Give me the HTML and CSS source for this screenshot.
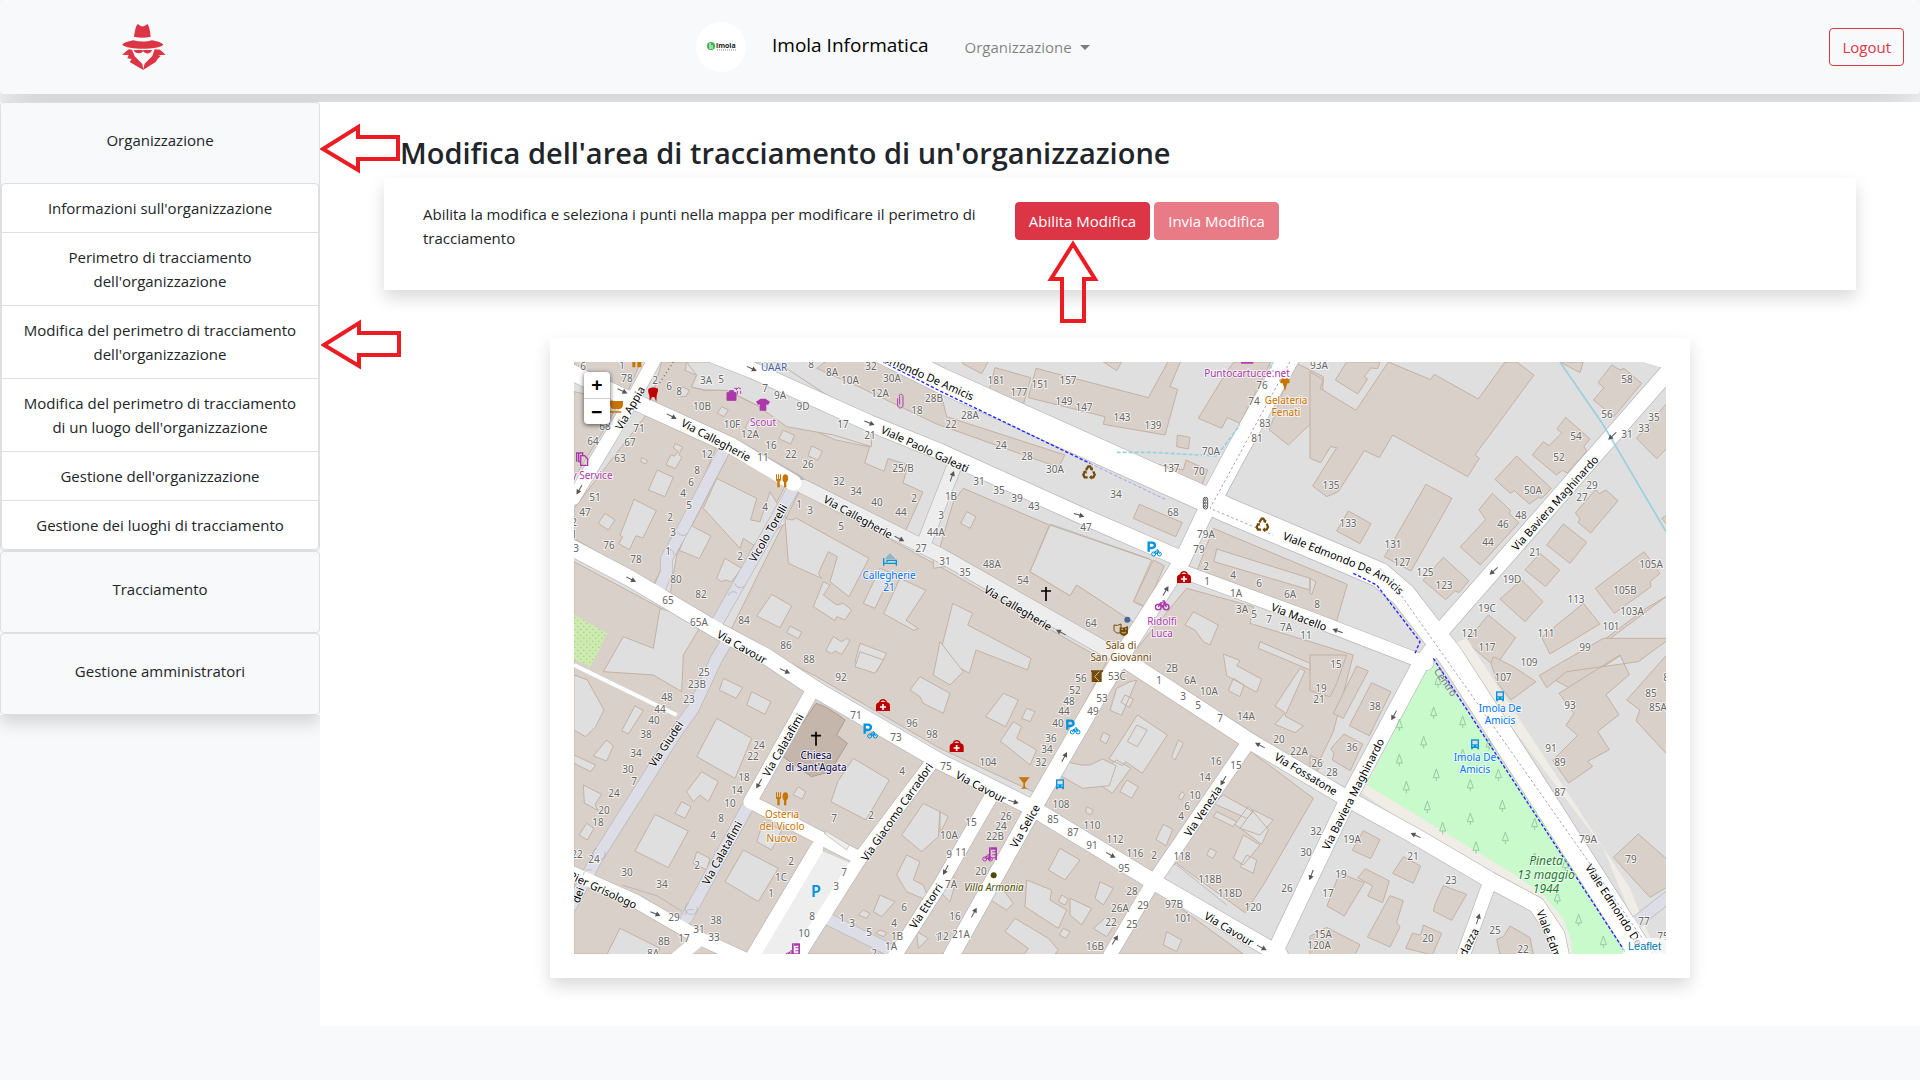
FILE: index.html
```html
<!DOCTYPE html>
<html lang="it">
<head>
<meta charset="utf-8">
<meta name="viewport" content="width=device-width, initial-scale=1">
<title>Modifica dell'area di tracciamento</title>
<link rel="stylesheet" href="styles.css">
</head>
<body>
<header class="navbar">
  <a class="navbar-logo" href="#" aria-label="Home">
    <svg width="44" height="46" viewBox="0 0 132 138" fill="#dc3545">
      <path d="M36 38C38 22 42 6 46 1c3-2 6 3 10 5 4 2 7 2 11 0 4-2 7-6 10-5 4 5 8 21 9 37-15 4-35 4-50 0z"/>
      <path d="M1 62C8 53 24 52 34 49c18 5 39 5 56 0 12 3 27 5 34 13-14 16-108 16-123 0z"/>
      <path d="M0 92 20 76l10 1 8 20 23 23 3 18-41-24 6-9-13-2 4-10z"/>
      <path d="M131 92 114 77l-16-1-7 20-23 23-5 19 38-24 6-9 9-9-8-2z"/>
      <path d="M35 78h26l1 3 2-3h26c-3 13-20 13-26 4-7 9-26 7-29-4z"/>
    </svg>
  </a>
  <div class="navbar-center">
    <span class="org-logo">
      <svg width="31" height="12" viewBox="0 0 31 12">
        <circle cx="5" cy="5" r="4" fill="#3bb54a"/>
        <path d="M4 2v6M6 4v4" stroke="#fff" stroke-width="1"/>
        <text x="10" y="7" class="org-logo-text">imola</text>
        <path d="M11 9h19" stroke="#888" stroke-width="1" stroke-dasharray="1 1"/>
      </svg>
    </span>
    <a class="navbar-brand" href="#">Imola Informatica</a>
    <button class="nav-dropdown" type="button">Organizzazione</button>
  </div>
  <button class="btn btn-outline" type="button">Logout</button>
</header>

<div class="layout">
  <nav class="sidebar">
    <div class="accordion">
      <section class="menu-card">
        <button class="menu-header" type="button">Organizzazione</button>
        <div class="menu-list">
          <a href="#">Informazioni sull'organizzazione</a>
          <a href="#">Perimetro di tracciamento dell'organizzazione</a>
          <a href="#">Modifica del perimetro di tracciamento dell'organizzazione</a>
          <a href="#">Modifica del perimetro di tracciamento di un luogo dell'organizzazione</a>
          <a href="#">Gestione dell'organizzazione</a>
          <a href="#">Gestione dei luoghi di tracciamento</a>
        </div>
      </section>
      <section class="menu-card"><button class="menu-header" type="button">Tracciamento</button></section>
      <section class="menu-card"><button class="menu-header" type="button">Gestione amministratori</button></section>
    </div>
  </nav>

  <main class="content">
    <h1>Modifica dell'area di tracciamento di un'organizzazione</h1>
    <section class="panel edit-panel">
      <p>Abilita la modifica e seleziona i punti nella mappa per modificare il perimetro di tracciamento</p>
      <div class="actions">
        <button class="btn btn-danger" type="button">Abilita Modifica</button>
        <button class="btn btn-danger" type="button" disabled>Invia Modifica</button>
      </div>
    </section>
    <section class="panel map-panel">
      <div class="map">
        <svg class="map-canvas" id="map" viewBox="0 0 1092 592">
          <defs>
            <g id="arrow"><path d="M-16 0H6" stroke="#555" stroke-width="3"/><path d="M2-8 17 0 2 8z" fill="#555"/></g>
            <g id="medical"><path d="M-21 17V1c0-6 5-9 9-10C-9-22 9-22 12-9c5 1 9 4 9 10v16z" fill="#bf0000"/><path d="M-7-10c2-6 12-6 14 0z" fill="#d9d0c9"/><path d="M-9 5H9M0-4v18" stroke="#fff" stroke-width="5"/></g>
            <g id="bus"><path d="M-12-14h24v26H-12z" fill="#0092da"/><path d="M-8-10H8V1H-8z" fill="#dfdfdf"/><path d="M-9 11v5M9 11v5" stroke="#0092da" stroke-width="5"/><path d="M-8 6h4M4 6h4" stroke="#fff" stroke-width="3"/></g>
            <g id="bike" fill="none" stroke-width="3"><circle cx="-8" cy="3" r="6"/><circle cx="9" cy="3" r="6"/><path d="M-8 3-3-6H6L0 3-3-6M9 3 5-10H1"/></g>
            <g id="bikepark" stroke="#0092da"><path d="M-15 10v-27h9c13 0 13 16 0 16h-9" fill="none" stroke-width="7"/><use href="#bike" x="8" y="14"/></g>
            <g id="food" fill="#c77400"><path d="M-18-20v16c0 4 3 5 4 5v18h7V1c2-1 4-2 4-5v-16h-3v14h-3v-14h-3v14h-3v-14z"/><path d="M10-20c11 0 11 21 3 24v15H6V4c-7-5-6-24 4-24z"/></g>
            <g id="recycle" fill="none" stroke="#734a08" stroke-width="7"><path d="M-9-6-2-17h5l6 9M13-2l4 10-4 8H4M-4 16h-9l-4-8 5-9" /><path d="m12-14-1 10-9-3zM8 9v14l-8-7zM-18-2l10-3 2 10z" fill="#734a08" stroke="none"/></g>
            <g id="cross" stroke="#000" stroke-width="5"><path d="M0-20v42M-15-8h30"/></g>
            <g id="tree" fill="none" stroke="#8fc09a" stroke-width="2.5"><path d="M0-18-9 8H9zM0 8v10"/></g>
            <g id="shop" fill="#ac39ac"><path d="M-1 15v-38h5v38zM5-23h18v38H18V10H9V7h9V1H9v-3h9v-6H9v-3h9v-5H5z"/><use href="#bike" x="-6" y="9" stroke="#ac39ac"/></g>
            <pattern id="dots" width="18" height="18" patternUnits="userSpaceOnUse"><path d="M4 4h3M13 13h3" stroke="#8fbf6d" stroke-width="3"/></pattern>
            <path id="amicis-bend" d="M708 177 796 212 811 220 834 242"/>
          </defs>
          <g transform="translate(-4 -7) scale(.333333)">
            <rect width="3300" height="1810" fill="#dfdfdf"/>

            <g class="building">
              <path d="M12 0H222L175 105 12 40zM12 110 150 140 95 235 12 370z"/>
              <path d="M275 21h75l-5 25 35 15-16 35 40 10 70 0 50 28 270 120 105 22-15 48 58 25 12-38 60 18-15 55 60 27-55 123L700 378 240 150z"/>
              <path d="M240 165 440 275 335 520 250 690 12 550V460zM480 290 650 385 430 800 300 720 320 600z"/>
              <path d="M690 405 1110 635 1610 920 1400 1315 1110 1180 740 965 480 830z"/>
              <path d="M12 620 590 930 740 1020 1110 1240 1380 1375 1750 1600 2020 1797H12z"/>
              <path d="M1650 930 2030 1180 2230 1330 2080 1590 2025 1673 1820 1525 1750 1560 1390 1340z"/>
              <path d="M1680 905 1850 700 2050 755 2040 805 2220 860 2350 900 2290 1130 2230 1255 2060 1150z"/>
              <path d="M1180 400 1438 510 1380 650 1500 722 1520 690 1700 805 1640 895 1100 610 1150 440zM1750 615l33 17-53 123-40-15z"/>
              <path d="M1180 10h80l-25 46-57-30zM1275 38l107 30-22 82-105-35zM1398 40l337 88 70-128h35l-40 95 23 8-38 137-185-32 5-23-230-57zM1600 21h55l-15 26z"/>
              <path d="M740 40 780 10h130l200 95 20 80 355 115-20 37-365-130-230-110z"/>
              <path d="M1885 190 1970 50l22-29h110l-92 184-38-17-17 32zM1750 325l0 20 140 60 23-60-65-30-8 30zM1822 240l38 7-5 35-35-7zM1708 448l129 55-20 42-127-55z"/>
              <path d="M1930 520 2332 688 2300 798 1880 650zM2170 20l90 45-5 110-100 95-57-45z"/>
              <path d="M2220 50l40 25-10 25 108 66 97-145 127 53 10-16 133 74 80-111h35l52 39-177 240 13 10-35 55-225-125-40 68-45-21-78 123-35 15-42-32 72-115-18-3-30 48-32-13zM2330 21h100l-7 20-20-2-20 25 10 8-30 45-67-42z"/>
              <path d="M2335 468l68 38-33 60-70-38zM2568 388l78 42-123 218-80-43zM2620 607l77 70-30 36-12-6-28 27-68-58zM2767 415l55 52-5 8 30 28-116 127-60-54 76-82-20-30zM2840 303l104 97-28 30-10-3-28 20-45-40-12 8-46-42zM2987 187l73 65-18 22 8 15-58 65-15-8-18 14-72-60 33-40 17 12 38-38-14-12zM3125 30l25 15 12-5 53 45-83 100-62-50 32-37-18-15z"/>
              <path d="M2970 21h70l-10 32zM3290 145l-90 105 60 61 30-31zM3108 405l36 32-82 97-38-32 6-10-14-18 60-70 12 12zM2980 507l70 55-50 63-70-55zM2910 595l59 50-42 50-62-50zM2855 675l64 65-54 60-75-68zM2755 780l82 68-62 87-87-75zM3222 590l48 65-30 25 3 15-110 80-57-75zM3040 745l50 62-150 90-25-50zM3288 725l-60 35-120 90 92 20-200 130-45-25zM3290 480l-15 10 15 18z"/>
              <path d="M2770 905l60 30 68 45-75 55-40-50-20-60zM3100 850h200l-95 70-215 30-60 48-22-37zM3150 900l-183 115 45 60-24 36 35 30-75 75 48 68 72-50-15-15 65-35-35-55 64-50-39-60 70-60zM3290 900l-120 135 40 30-12 32 92 100z"/>
              <path d="M2220 900h110l-30 85-20 40-60-18zM2360 933l35 15-75 142-30-15zM2405 983l58 27-65 132-60-30zM2322 1137l56 30-37 80-54-32 5-20-10-14zM2220 1200l40 20-20 30 20 20-20 30-20-10zM2380 1427l50 27-28 57-55-25zM2500 1505l52 28-22 52-62-30zM2308 1555l75 28-60 100-52-30zM2386 1541l72 37-20 65-45-20 15-30-45-25zM2460 1622l40 15-20 65 10 14-30 60-68-30zM2620 1592l70 26-45 78-55-28 5-20zM2270 1717l100 52-15 30h-135v-55zM2560 1710l55 25-28 65-80-20 20-45 25 5zM2820 1713l60 35 10 50h-100l-10-45 20-8zM3205 1437l85 75v85l-50 30-110-120z"/>
            </g>

            <g class="courtyard">
              <path d="M350 21 620 21 900 205 905 275 790 240 650 215 560 150 520 130 470 106 405 105 364 96 380 61z"/>
              <path d="M640 226l34 15-12 26-36-16zM725 273l32 15-13 28-30-14zM455 155l20 10-13 20-20-10zM540 190l30 15-20 30-25-15zM335 95l23 10-10 20-25-3z"/>
              <path d="M262 345l48 22-25 58-50-20zM315 265l23 12-12 22 10 8-20 34-28-12 15-30 10 5 12-15-15-10zM215 307l18 10-6 10-15-8zM192 433l67 34-40 82-21-7-20 42-32-18 12-20-8-5zM105 475l30 20-20 30-30-20zM440 370 560 430 542 495 570 500 600 410 655 500 550 570 520 550 510 580 400 460zM360 510l63 33-35 68-60-25zM465 610l50 30-30 40-20-5-10 5-15-10z"/>
              <path d="M645 490 665 495 680 490 897 610 837 725 780 680 802 605 775 590 745 655 755 670 655 625zM605 718l60 35-35 65-70-35zM760 680 780 690 760 720 800 750 820 745 845 765 825 795 800 785 795 797 730 755zM930 640l35 15-50 105-35-15zM990 670l78 36-60 90 38 25-15 5-90-50zM660 813l35 18-10 20-35-18zM790 845l25 15 15-10 10 8-25 40-20-10-10 8-18-10zM870 865l80 30-30 55-65-30zM1090 640l0-45 100 30z"/>
              <path d="M1190 470l28 15-18 35-28-15zM1440 510 1745 615 1690 740 1720 755 1695 805 1520 690 1500 722 1380 650zM1148 745l60 30-15 35 190 100-10 35-155-60-20 70-90-50z"/>
              <path d="M1940 582 2220 670v35l-288-85zM2220 670l18 10-12 38-6-3zM1870 770l75 40-25 60-20-10-25-35-30-15zM2070 860l150 65v20l-155-65zM1960 897l50 20-10 15 75 40-15 40-90-50zM1990 970l32 20-12 35-35-18zM2190 940l15 8-60 135 55 30-25 20-60-25 30-35-30-20z"/>
              <path d="M1300 1015l45 20-38 80-60-30zM1370 1060l25 10-15 30-25-10zM1330 1100l25 15-15 35 60 35-20 45-80-65-10-5zM1640 1000l40-20 20-4-45 105-35-15zM1665 1020l25 12-12 25-25-15zM1702 1080l90 60-75 115-50-35-10 12-40-20zM1700 1110l32 15-30 50-30-15zM1600 1132l20 10-12 25-18-12zM1640 1215l42 25-55 75-65-45zM1670 1275l35 20-20 35-35-20zM1550 1355l20 10-8 15-15-8z"/>
              <path d="M1560 1230l38-18 40 20-20 60-80 8-70-40 20-40 45 10zM1825 1155l15 10-25 50-10-10zM1780 1408l28 15-20 50-30-20zM1835 1310l10 8-10 18-10-8zM1960 1320l90 50-20 20-100-45zM1940 1370l60 30-10 15-60-30zM2035 1353l60 70-20 45-80-60zM2050 1365l60 30-40 45-60-20zM2020 1440l50 30-50 60-30-20zM2030 1500l30 15-10 40-40-20zM1920 1480l20 10-12 20-18-10z"/>
              <path d="M1470 1480l60 35-45 60-50-30zM1370 1575l75 30-5 30 50 30-25 55-100-65zM1610 1685l30 15-30 45-40-25zM1475 1620l20 12-10 18-20-10zM1500 1630l65 30-30 50-35-30zM1590 1580l40 20-30 50-25-20zM1335 1690l100 60 30 35-20 25h-90l20-30-70-50zM1480 1720l20 10-12 20-20-10zM1790 1730l45 25-15 35-40-20z"/>
              <path d="M100 950 160 845 250 880 270 760 400 800 340 900 335 1010 250 960z"/>
              <path d="M12 960l40 15 50 90-25 50-30 30-35-20zM195 1052l25 15-45 70-20-10zM460 970l58 28-20 32-50-25zM545 1010l58 30-18 38-55-28zM110 1155l20 18-20 45-40-15zM12 1200l65 30-15 20-50-25zM40 1290l55 28-20 30 8 18-40-22zM50 1405l22 15-20 35-25-15zM440 1090l105 60-50 120-115-65zM395 1250l50 30-30 60-25-20-20 20-20-30 15-20zM335 1340l28 15-18 35-30-15zM255 1378l100 50-60 110-100-50zM520 1485l105 55-60 100-100-60zM150 1720l120 60-10 20H110zM380 1490l40 20-10 35-40-20z"/>
              <path d="M850 1210l108 65-70 120-105-55 20-60zM685 1295l22 15-10 22-28-12zM580 1400l55 25-30 60-45-25zM1060 1345l50 25-5 75-50 45-60-50zM1010 1500l40 20-20 55 30 15 20 50-70-30-30-50zM930 1620l45 20-40 45-25-15zM930 1725l20 8-8 12-25-10zM880 1665l20 10-10 15-25-10zM1110 1370l25 15-25 50zM1040 1730l35 20-30 30z"/>
              <path d="M1150 1550l-40 60 30 30 15-50zM1260 1575l25 10 45 60-20 20-80-50zM870 890l70 25-25 40-60-20zM1050 965l90 50-20 60-60-30-10-20-30-20zM1110 860l70 90-40 40-50-30z"/>
            </g>
            <path class="church" d="M738 1045 765 1055 805 1080 825 1095 800 1140 832 1165 780 1250 725 1265 632 1200z"/>
            <path d="M12 780 112 835 80 900 60 935 12 912z" fill="#cdebb0"/><path d="M12 780 112 835 80 900 60 935 12 912z" fill="url(#dots)"/>
            <path d="M2680 900 3240 1775 3290 1797H3220L2620 880z" fill="#f0ece6"/><path d="M2640 870 3100 1480 3230 1797 3260 1797 3180 1600 2690 850z" fill="#f0ece6"/>
            <path d="M2575 910 3180 1797H3000L2900 1650 2770 1580 2370 1310z" fill="#f0ece6"/>
            <path class="park" d="M2585 910 3170 1770 3160 1797H3005V1760L2980 1690 2920 1620 2820 1550 2390 1290z"/>

            <g class="road casing">
              <path stroke-width="52" d="M0 50 150 120 480 270 680 385M430 0 545 45 900 205 1110 290 1530 480 1830 610M-10 570 180 670 440 825 590 905 740 1005 1110 1220 1380 1355 1750 1580 2130 1800M1650 905 2050 1165 2330 1330 2530 1440 2760 1575 2900 1650 2960 1740 2975 1810M3290 55 2620 820M2590 880 2550 930 2330 1340 2210 1590 2110 1800M1925 430 1835 620 1650 910 1390 1360 1145 1800"/>
              <path stroke-width="44" d="M255 10 190 130 10 430M720 1020 540 1340 870 1510M1080 1230 870 1510 680 1810M740 1480 550 1800M1260 1330 1110 1590 970 1810M2030 1170 1750 1580 1620 1800M0 1550 200 1640 390 1750 520 1810M1840 650 2220 790 2570 925M2760 1580 2680 1800"/>
              <path stroke-width="78" d="M940-10 1110 75 1900 430 1970 465 2220 570 2430 660 2500 720 2600 850 2640 900 2917 1330 3230 1820"/><path stroke-width="68" d="M2160 0 2000 290 1925 430"/>
              <path stroke-width="38" d="M670 400 440 805M470 860 440 910 370 1060 320 1130 80 1510 5 1650M465 280 335 530 290 610 290 650 265 710M530 1360 350 1690M770 1690 970 1790M3200 1700 3290 1630"/>
              <path stroke-width="46" d="M700 395 1110 600 1620 890M1150 340 1060 570"/>
            </g>
            <g class="road pedestrian"><path d="M670 400 440 805M470 860 440 910 370 1060 320 1130 80 1510 5 1650M465 280 335 530 290 610 290 650 265 710M530 1360 350 1690M770 1690 970 1790M3200 1700 3290 1630"/></g>
            <g class="road living"><path d="M700 395 1110 600 1620 890M1150 340 1060 570"/></g>
            <path d="M750 1485 855 1530 700 1797H570z" fill="#eee"/>
            <path d="M12 930 320 1080" stroke="#fff" stroke-width="12"/>
            <g class="road">
              <path stroke-width="48" d="M0 50 150 120 480 270 670 383M430 0 545 45 900 205 1110 290 1530 480 1830 610M-10 570 180 670 440 825 590 905 740 1005 1110 1220 1380 1355 1750 1580 2130 1800M1650 905 2050 1165 2330 1330 2530 1440 2760 1575 2900 1650 2960 1740 2975 1810M3290 55 2620 820M2590 880 2550 930 2330 1340 2210 1590 2110 1800M1925 430 1835 620 1650 910 1390 1360 1145 1800"/>
              <path stroke-width="40" d="M255 10 190 130 10 430M720 1020 540 1340 870 1510M1080 1230 870 1510 680 1810M740 1480 550 1800M1260 1330 1110 1590 970 1810M2030 1170 1750 1580 1620 1800M0 1550 200 1640 390 1750 520 1810M380 1760 320 1810M1840 650 2220 790 2570 925M2760 1580 2680 1800"/>
              <path stroke-width="74" d="M940-10 1110 75 1900 430 1970 465 2220 570 2430 660 2500 720 2600 850 2640 900 2917 1330 3230 1820"/><path stroke-width="64" d="M2160 0 2000 290 1925 430"/>
            </g>
            <path d="M762 1435 770 1430 838 1470 830 1485z" fill="#eee" stroke="#c4b1a2" stroke-width="2"/>
            <g fill="none" stroke="#aaa" stroke-width="2">
              <path d="M80 1480a18 18 0 1 0 24 10M40 1560a18 18 0 0 1 25-15M355 1645a18 18 0 1 0 26 10M345 1680a18 18 0 0 1 26-15M322 530a18 18 0 0 0 30 5M290 582a18 18 0 0 1 22 18M495 685a16 16 0 0 0 28 8M474 722a16 16 0 0 1 28-6M1440 507 1740 612M1820 1530 1970 1650M155 1590 260 1622 335 1668"/>
            </g>
            <g fill="none" stroke="#99d0df" stroke-width="5"><path d="M2970 21 3100 210 3288 530"/><path stroke-dasharray="12 6" d="M1640 292H1745L1940 303 2010 210M2098 30l12 20"/></g>
            <g fill="none" stroke="#b99bb8" stroke-width="3" stroke-dasharray="8 7"><path d="M2160 20 1920 460 2110 540M2430 640 2500 730 2620 900 3250 1797"/></g>
            <g fill="none" stroke="#22f" stroke-width="4" stroke-dasharray="10 6"><path d="M940 21 1110 108 1560 325M2350 655 2420 690 2550 860 2535 895M2590 910 3165 1790"/><path d="M1560 325 1790 435" stroke-width="1"/></g>
            <path d="M310 21 265 90" stroke="#666" stroke-width="4" stroke-dasharray="3 9"/>
            <path d="M3290 21v21L3220 21z" fill="#fff"/>

            <g id="signs"></g>
            <use href="#medical" x="1842" y="667"/><use href="#medical" x="939" y="1051"/><use href="#medical" x="1160" y="1174"/>
            <use href="#bikepark" x="1751" y="580"/><use href="#bikepark" x="899" y="1126"/><use href="#bikepark" x="1507" y="1114"/>
            <use href="#food" x="636" y="378"/><use href="#food" x="636" y="1332"/><path d="M187 21h9v16h-9zM202 21h12v16h-12z" fill="#c77400"/>
            <use href="#recycle" x="1557" y="351"/><use href="#recycle" x="2077" y="508"/>
            <use href="#cross" x="1428" y="716"/><use href="#cross" x="738" y="1150"/>
            <use href="#bus" x="1470" y="1287"/><use href="#bus" x="2790" y="1023"/><use href="#bus" x="2715" y="1167"/>
            <use href="#shop" x="1258" y="1500"/><use href="#shop" x="667" y="1788"/>
            <use href="#bike" stroke="#ac39ac" transform="translate(1776 752) scale(1.4)"/>
            <path d="M235 102c8-6 22-6 29 0 1 8-3 14-4 20l-1 18-6-14h-7l-7 12-1-18c-3-5-4-10-3-18z" fill="#bf0000"/>
            <path d="M120 138h39v10c0 14-10 14-12 14h-17c-9-2-10-12-10-24zm0 31h34v4h-34z" fill="#c77400"/>
            <path d="M471 113h27v23h-27zM479 113v-6h12v6M498 105l7-7M505 98l8 4M493 100h8M502 118v-10M512 108v8" fill="#ac39ac" stroke="#ac39ac" stroke-width="3"/>
            <path d="m558 140 14-9h14l14 9-6 10-5-2v19h-20v-19l-5 2z" fill="#ac39ac"/>
            <path d="M983 130v20c0 12 16 12 16 0v-26c0-10-16-6-10 0v24" fill="none" stroke="#ac39ac" stroke-width="3"/>
            <path d="M20 320v-26h18v8M32 302h12l9 9v20H32zM26 296v24h6" fill="none" stroke="#ac39ac" stroke-width="4"/>
            <path d="M941 632v-22M941 625h38M979 632v-16H951v6" fill="none" stroke="#0092da" stroke-width="4"/><path d="M944 612 960 594l17 18z" fill="#8cb8ca"/>
            <circle cx="1672" cy="794" r="9" fill="#4863a0"/><circle cx="1271" cy="1561" r="9" fill="#4d4d00"/>
            <path d="M1632 810q10 4 21-3v24q-12 9-21-5z" fill="none" stroke="#734a08" stroke-width="3"/><path d="M1649 817q12 4 25-4v22q-12 16-25 0z" fill="#734a08"/><path d="M1654 823h5M1665 822h5M1655 832q8 5 13-1" stroke="#fff" stroke-width="2" fill="none"/>
            <path d="M1563 946h36v5h-4v30h-30v-30h-2z" fill="#734a08"/><path d="m1588 950-14 15 14 14" fill="none" stroke="#fff" stroke-width="2"/>
            <path d="M1346 1267h33l-14 17v12l8 5h-21l8-5v-12z" fill="#c77400"/><path d="M2131 76q6-10 14-4 8-6 14 4l-1 9h-6l-7 23-7-23h-7z" fill="#c77400"/>
            <path d="M2013 21h37v5h-37z" fill="#ac39ac"/>
            <g fill="none" stroke="#555" stroke-width="3"><rect x="1900" y="427" width="13" height="35" rx="6"/><circle cx="1906" cy="434" r="3"/><circle cx="1906" cy="444" r="3"/><circle cx="1906" cy="454" r="3"/></g>
          </g>
          <g id="labels">
            <text class="label street bend"><textPath href="#amicis-bend">Viale Edmondo De Amicis</textPath></text>
            <text class="label parking" x="242" y="535">P</text>
          </g>
        </svg>
        <div class="zoom-control">
          <button type="button" aria-label="Zoom in">+</button>
          <button type="button" aria-label="Zoom out">−</button>
        </div>
        <a class="attribution" href="#">Leaflet</a>
      </div>
    </section>
    <svg class="pointer pointer-menu" width="82" height="52" viewBox="0 0 82 52"><path d="M3 26 38 4V14H78V36H38V47z"/></svg>
    <svg class="pointer pointer-item" width="82" height="52" viewBox="0 0 82 52"><path d="M3 26 38 4V14H78V36H38V47z"/></svg>
    <svg class="pointer pointer-button" width="52" height="84" viewBox="0 0 52 84"><path d="M26 4 48 39H37V81H15V39H4z"/></svg>
  </main>
</div>
<script src="map.js"></script>
</body>
</html>
```
FILE: styles.css
```css
*, *::before, *::after { box-sizing: border-box; }

body {
  margin: 0;
  min-height: 100vh;
  background: #f8f9fa;
  color: #212529;
  font: 15px/24px "Open Sans", "Noto Sans", sans-serif;
}

button { font: inherit; cursor: pointer; }
a { color: inherit; text-decoration: none; }

.navbar {
  display: flex;
  align-items: center;
  justify-content: space-between;
  height: 94px;
  padding: 0 16px 0 122px;
  border-radius: 4px;
  background: #f8f9fa;
  box-shadow: 0 16px 48px rgba(0, 0, 0, .175);
}
.navbar-logo { display: flex; }
.navbar-center { display: flex; align-items: center; flex: 1; padding-left: 530px; }
.org-logo {
  display: flex;
  align-items: center;
  justify-content: center;
  width: 50px;
  height: 50px;
  margin-right: 26px;
  border-radius: 50%;
  background: #fff;
}
.org-logo-text { font: 700 7px "Open Sans", sans-serif; fill: #222; }
.navbar-brand { margin-right: 36px; padding-bottom: 4px; color: #000; font-size: 19px; }
.nav-dropdown {
  display: flex;
  align-items: center;
  gap: 8px;
  padding: 0;
  border: 0;
  background: none;
  color: rgba(0, 0, 0, .5);
}
.nav-dropdown::after {
  content: "";
  border: 5px solid transparent;
  border-top-color: currentColor;
  border-bottom: 0;
}

.btn { padding: 6px 12px; border: 1px solid #dc3545; border-radius: 4px; }
.btn-outline { background: transparent; color: #dc3545; }
.btn-danger { padding: 6px 13px; background: #dc3545; color: #fff; }
.btn-danger:disabled { opacity: .65; }

.layout {
  position: relative;
  display: grid;
  grid-template-columns: 1fr 5fr;
  margin-top: 8px;
}

.sidebar { background: #f8f9fa; }
.accordion { box-shadow: 0 8px 16px rgba(0, 0, 0, .15); }
.menu-card { border: 1px solid #dfdfdf; border-radius: 4px; background: #f8f9fa; }
.menu-header {
  display: block;
  width: 100%;
  padding: 25px 12px 31px;
  border: 0;
  background: none;
  color: inherit;
}
.menu-list {
  overflow: hidden;
  border: 1px solid #dfdfdf;
  border-radius: 4px;
  background: #fff;
  text-align: center;
}
.menu-list a { display: block; padding: 12px 16px; }
.menu-list a + a { border-top: 1px solid #dfdfdf; }

.content { position: relative; padding: 32px 4% 48px; background: #fff; }
.content h1 { margin: 0 16px 6px; font-size: 29px; line-height: 38px; font-weight: 600; }
.panel { padding: 24px; background: #fff; box-shadow: 0 8px 16px rgba(0, 0, 0, .15); }
.edit-panel {
  display: grid;
  grid-template-columns: 5fr 7fr;
  gap: 8px;
  min-height: 112px;
  padding-left: 39px;
}
.edit-panel p { margin: 0; }
.actions { display: flex; align-items: flex-start; gap: 4px; }
.map-panel { max-width: 1140px; margin: 48px auto 0; }

.map { position: relative; }
.map-canvas { display: block; width: 100%; overflow: hidden; }
.building { fill: #d9d0c9; stroke: #c4b1a2; stroke-width: 3; }
.courtyard { fill: #dfdfdf; stroke: #c4b1a2; stroke-width: 3; }
.church { fill: #c4b6ab; stroke: #ac9a8d; stroke-width: 3; }
.park { fill: #c8facc; }
.road { fill: none; stroke: #fff; stroke-linejoin: round; stroke-linecap: round; }
.road.casing { stroke: #b8b6b6; }
.road.pedestrian { stroke: #dddde8; stroke-width: 34; }
.road.living { stroke: #ededed; stroke-width: 42; }

.label {
  font: 10px "Noto Sans", sans-serif;
  text-anchor: middle;
  fill: #111;
  stroke: rgba(255, 255, 255, .7);
  stroke-width: 2px;
  paint-order: stroke;
}
.label.number { fill: #666; }
.label.street { fill: #000; font-size: 11px; }
.label.bend { text-anchor: start; }
.label.parking { fill: #0092da; font-size: 16px; font-weight: 600; stroke: none; }
.label.shop { fill: #ac39ac; }
.label.food { fill: #c77400; }
.label.transport { fill: #0074ff; }
.label.culture { fill: #734a08; }
.label.office { fill: #4863a0; }
.label.worship { fill: #000050; }
.label.villa { fill: #4d4d00; font-style: italic; }
.label.green { fill: #1c7a2c; font-size: 12px; font-style: italic; }
.label.district { fill: #866a95; stroke: none; }

.zoom-control {
  position: absolute;
  top: 10px;
  left: 10px;
  width: 26px;
  border-radius: 4px;
  background: #fff;
  box-shadow: 0 1px 5px rgba(0, 0, 0, .65);
}
.zoom-control button {
  display: block;
  width: 100%;
  height: 26px;
  padding: 0;
  border: 0;
  background: none;
  color: #000;
  font: 700 18px/24px "DejaVu Sans Mono", monospace;
}
.zoom-control button + button { border-top: 1px solid #ccc; }
.attribution {
  position: absolute;
  right: 0;
  bottom: 0;
  padding: 0 5px;
  background: rgba(255, 255, 255, .7);
  color: #0078a8;
  font: 11px/16px "Liberation Sans", sans-serif;
}

.pointer { position: absolute; fill: none; stroke: #ed1c24; stroke-width: 4; }
.pointer-menu { top: 21px; left: 0; }
.pointer-item { top: 217px; left: 1px; }
.pointer-button { top: 138px; left: 727px; }

@media (max-width: 1100px) {
  .navbar { padding-left: 16px; }
  .navbar-center { padding-left: 16px; }
  .layout, .edit-panel { grid-template-columns: 1fr; }
  .pointer { display: none; }
}
```
FILE: map.js
```js
// Labels are grouped by map tile. Tile coordinates run at three units per pixel.
const NS = "http://www.w3.org/2000/svg";
const TILES = [
  { col: 0, row: 0, numbers: "6,38,32 1,155,31 78,172,69 2,255,75 6,296,93 8,326,107 3A,408,76 5,452,73 10B,396,152 10F,487,206 12A,541,236 7,586,100 9A,631,121 9D,698,152 17,818,206 21,899,239 8,722,27 8A,785,52 10A,841,76 32,904,34 30A,966,69 12A,931,115 28B,1092,130 18,1042,164 68,104,212 71,206,220 64,68,258 67,179,261 63,150,309 12,412,298 8,382,346 6,363,382 4,340,415 5,357,450 2,299,486 3,309,532 1,294,587 51,74,425 47,46,470 2,13,502 1,11,537 3,17,578 76,117,569 78,198,612 80,318,672 82,394,717 65,294,735 65A,388,800 84,523,795 86,648,871 16,602,269 11,579,307 22,663,298 26,715,327 25/B,998,338 32,807,379 34,859,408 40,921,440 44,994,472 2,1032,428 4,586,457 1,687,447 3,721,464 5,813,514 2,509,602 3,1112,480 44A,1098,531 27,1053,578" },
  { col: 1, row: 0, numbers: "181,167,76 177,238,111 151,300,88 157,385,76 149,371,139 147,432,156 143,547,186 139,640,210 76,965,89 74,943,139 83,975,204 81,950,250 28A,90,181 22,32,206 24,183,271 28,262,304 30A,345,341 70A,813,289 137,693,338 70,776,349 31,118,379 35,176,405 39,232,428 43,283,453 1B,32,423 34,527,418 68,700,470 47,437,517 79A,797,536 79,777,583 2,798,633 1,801,677 4,880,660 6,956,685 6A,1049,718 1A,887,715 3A,906,762 5,943,778 7,987,793 7A,1039,817 11,1098,840 48A,155,626 54,248,675 31,14,619 35,76,652 64,454,803" },
  { col: 2, row: 0, numbers: "93A,28,29 58,950,72 56,891,178 54,799,242 52,748,306 35,1033,185 33,1001,219 31,951,236 50A,670,405 29,846,391 27,817,427 48,634,480 46,580,506 44,534,560 135,62,391 133,114,505 131,249,567 127,275,622 125,346,650 123,403,690 21,674,590 19D,607,672 19C,530,758 113,798,733 105A,1024,627 105B,945,704 103A,965,768 101,903,812 121,480,835 117,531,876 111,707,835 99,824,875 8,21,747" },
  { col: 0, row: 1, numbers: "88,717,12 92,814,66 25,401,52 23B,382,87 23,358,131 48,292,125 44,270,161 40,253,196 38,229,238 34,198,294 30,173,341 7,193,378 24,132,414 20,103,465 18,84,500 71,857,181 96,1027,204 73,978,247 98,1085,238 24,568,271 22,548,304 18,522,365 14,500,405 10,481,443 8,454,490 4,428,540 2,382,629 4,995,349 7,793,488 2,904,479 22,22,597 24,72,613 30,170,650 34,277,688 29,312,786 31,386,823 17,341,848 33,432,846 38,438,796 8B,283,859 8A,250,893 2,662,619 1C,633,665 1,602,713 7,822,652 3,797,692 8,727,784 10,701,833 1,815,790 3,845,804 5,896,832 6,1003,757 4,972,804 1B,981,842 1A,964,873 2,913,893 1,1105,845" },
  { col: 1, row: 1, numbers: "56,423,69 53C,531,62 52,404,105 48,388,138 53,487,129 44,372,169 49,459,168 40,354,205 36,332,248 34,321,282 32,304,320 104,144,321 75,18,333 108,364,448 85,339,493 26,198,482 24,182,512 22B,166,544 15,93,502 10A,28,540 9,26,598 11,63,590 20,123,648 7A,33,687 16,45,784 12,8,844 21A,62,838 110,456,510 87,398,532 112,524,553 91,455,571 116,584,594 2,641,601 95,553,640 118,726,604 28,575,708 26A,541,760 29,609,751 22,514,800 25,576,807 16B,466,872 97B,702,748 101,730,790 118B,811,671 118D,871,715 120,940,757 2B,697,40 1,657,74 6A,750,75 10A,807,109 3,728,122 5,775,150 7,839,188 14A,918,182 20,1018,251 22A,1077,287 16,828,317 15,889,331 14,796,367 10,765,420 6,740,452 4,724,482 30,1098,590 26,1040,698" },
  { col: 2, row: 1, numbers: "15,77,26 19,34,98 21,27,133 38,194,152 36,125,277 26,20,323 28,65,351 32,18,528 19A,126,553 21,309,604 19,93,657 17,55,713 23,423,676 15A,38,838 120A,27,870 20,353,849 25,556,824 22,639,882 109,656,20 107,580,67 93,781,151 85,1024,115 85A,1044,157 8,1069,66 91,724,280 89,751,322 87,750,410 79A,835,551 79,963,611 77,1003,799 75,1060,842" }
];

// [text, x1, y1, x2, y2]: a street name runs along the line between its two points.
const STREETS = [
  ["Via Appia", 145, 220, 215, 100], ["Via Callegherie", 338, 200, 540, 308],
  ["Viale Paolo Galeati", 935, 220, 1195, 342], ["Via Callegherie", 762, 430, 963, 543],
  ["Vicolo Torelli", 548, 615, 642, 450], ["Via Cavour", 445, 835, 588, 916],
  ["Edmondo De Amicis", 915, -6, 1222, 133], ["Via Callegherie", 1245, 700, 1445, 820],
  ["Via Macello", 2108, 755, 2266, 815], ["Via Baviera Maghinardo", 2832, 580, 3078, 308],
  ["Via Giudei", 245, 1230, 332, 1102], ["Via Calatafimi", 585, 1260, 690, 1080],
  ["Via Calatafimi", 405, 1588, 508, 1400], ["Via Giacomo Carradori", 880, 1515, 1080, 1225],
  ["Pier Grisologo", 4, 1560, 196, 1650], ["dei", 16, 1638, 30, 1602],
  ["Via Ettorri", 1024, 1718, 1110, 1585], ["Via Cavour", 1160, 1257, 1306, 1334],
  ["Via Selice", 1330, 1475, 1402, 1352], ["Via Venezia", 1850, 1443, 1950, 1295],
  ["Via Fossatone", 2118, 1202, 2300, 1310], ["Via Baviera Maghinardo", 2265, 1478, 2433, 1154],
  ["Via Cavour", 1906, 1680, 2050, 1765], ["Viale Edmondo De", 3060, 1534, 3206, 1763],
  ["Viale Edm", 2912, 1674, 2962, 1802], ["dazza", 2678, 1798, 2716, 1725]
];

// [class, x, first line y, lines...]
const PLACES = [
  ["office", 612, 37, "UAAR"], ["shop", 580, 200, "Scout"], ["shop", 66, 360, "y Service"],
  ["transport", 958, 660, "Callegherie", "21"], ["shop", 2031, 53, "Puntocartucce.net"],
  ["food", 2147, 135, "Gelateria", "Fenati"], ["shop", 1776, 799, "Ridolfi", "Luca"],
  ["culture", 1653, 870, "Sala di", "San Giovanni"], ["worship", 738, 1200, "Chiesa", "di Sant'Agata"],
  ["food", 637, 1376, "Osteria", "del Vicolo", "Nuovo"], ["villa", 1271, 1596, "Villa Armonia"],
  ["transport", 2791, 1060, "Imola De", "Amicis"], ["transport", 2716, 1206, "Imola De", "Amicis"],
  ["green", 2928, 1517, "Pineta", "13 maggio", "1944"]
];

const ARROWS = "157,108,25 305,184,27 545,41,25 898,204,22 183,673,27 28,404,120 988,551,27 1146,364,-70 1527,480,17 1473,832,208 1787,708,-60 3127,243,138 2771,648,138 2303,828,200 645,948,25 567,1286,120 256,1676,22 1483,1206,-62 1330,1340,17 1212,1673,-62 1127,1545,118 1622,1500,30 1635,1755,-58 2070,1171,208 1960,1277,120 2075,1778,28 2472,1081,118 2537,1441,205 2224,1560,110 2724,1692,-72";
const TREES = "384,80 371,174 458,201 268,210 341,262 537,268 268,316 458,300 379,360 565,360 481,391 289,397 352,456 577,453 481,492 398,520 586,549 674,507 498,578 766,630 742,730 674,612 806,796 880,861";

const px = v => Math.round(v / 3);

function addLabel(text, kind, x, y, angle = 0) {
  const node = document.createElementNS(NS, "text");
  node.setAttribute("class", `label ${kind}`);
  node.setAttribute("x", x);
  node.setAttribute("y", y);
  node.setAttribute("dy", 4);
  if (angle) node.setAttribute("transform", `rotate(${angle} ${x} ${y})`);
  node.textContent = text;
  document.getElementById("labels").append(node);
}

function addSign(id, x, y, angle = 0) {
  const node = document.createElementNS(NS, "use");
  node.setAttribute("href", `#${id}`);
  node.setAttribute("transform", `translate(${x} ${y}) rotate(${angle})`);
  document.getElementById("signs").append(node);
}

for (const { col, row, numbers } of TILES) {
  for (const entry of numbers.split(" ")) {
    const [text, x, y] = entry.split(",");
    addLabel(text, "number", px(x) - 4 + col * 370, px(y) - 7 + row * 300);
  }
}
for (const [text, x1, y1, x2, y2] of STREETS) {
  const angle = Math.round(Math.atan2(y2 - y1, x2 - x1) * 180 / Math.PI);
  addLabel(text, "street", px((x1 + x2) / 2) - 4, px((y1 + y2) / 2) - 7, angle);
}
for (const [kind, x, y, ...lines] of PLACES) {
  const step = kind === "green" ? 14 : 12;
  lines.forEach((line, i) => addLabel(line, kind, px(x) - 4, px(y) - 7 + i * step));
}
addLabel("Centro", "district", px(2627) - 4, px(982) - 7, 55);
for (const entry of ARROWS.split(" ")) addSign("arrow", ...entry.split(",").map(Number));
for (const entry of TREES.split(" ")) {
  const [x, y] = entry.split(",").map(Number);
  addSign("tree", x + 2220, y + 900);
}
```
